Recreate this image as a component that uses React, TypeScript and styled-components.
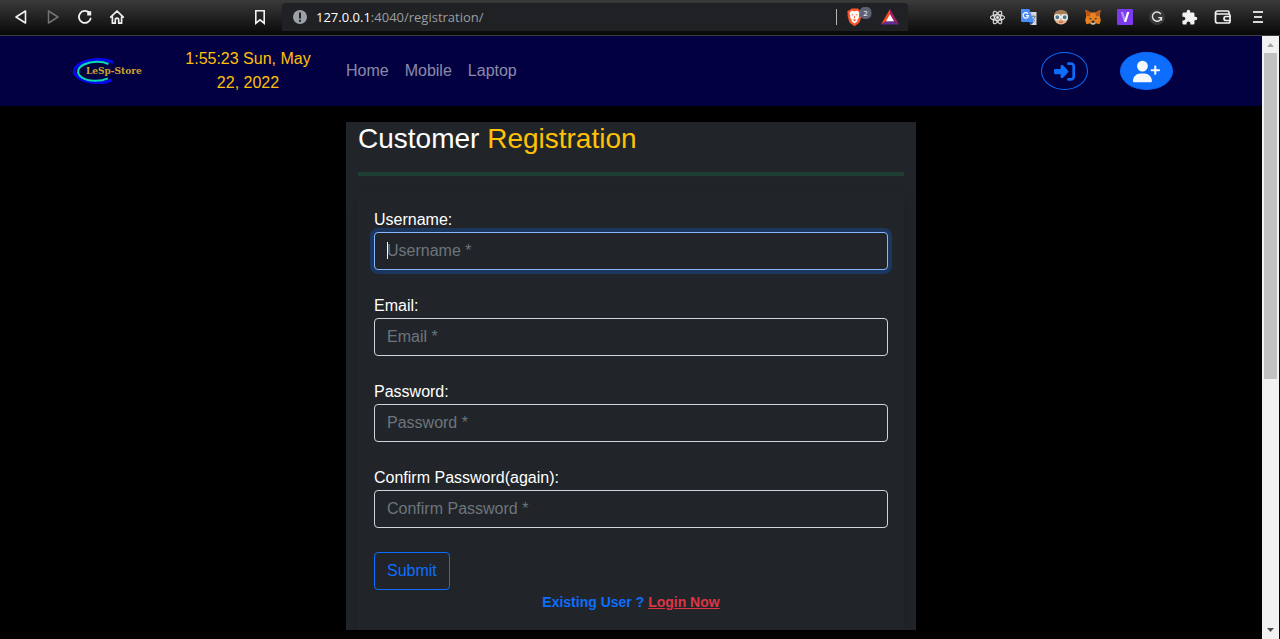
import React from "react";
import styled, { createGlobalStyle, css } from "styled-components";
import { FaReact } from "react-icons/fa";
import { FaRightToBracket, FaUserPlus } from "react-icons/fa6";
import { MdExtension } from "react-icons/md";

const GlobalStyle = createGlobalStyle`
  *, *::before, *::after { box-sizing: border-box; }
  body {
    margin: 0;
    background: #000;
    color: #fff;
    font-family: "Liberation Sans", Arial, sans-serif;
    font-size: 16px;
    line-height: 24px;
  }
`;

/* ---------- browser chrome ---------- */

const Window = styled.div`
  display: flex;
  flex-direction: column;
  height: 100vh;
  overflow: hidden;
`;

const Chrome = styled.header`
  flex: none;
  background: #0b0b0b;
  border-bottom: 1px solid #3c3c3c;
  padding-bottom: 4px;
`;

const Toolbar = styled.div`
  display: flex;
  align-items: stretch;
  height: 31px;
  padding: 0 5px;
  background: linear-gradient(#3a3a3a, #0e0e0e);
`;

const Tools = styled.div`
  display: flex;
  padding-top: 3px;
`;

const ToolButton = styled.button<{ $wide?: boolean }>`
  display: flex;
  align-items: center;
  justify-content: center;
  width: ${(p) => (p.$wide ? 35 : 32)}px;
  padding: 0;
  border: 0;
  background: none;
  color: #f1f1f1;
`;

const BookmarkSlot = styled(Tools)`
  margin-left: 111px;
`;

const AddressBar = styled.div`
  display: flex;
  flex: 1;
  align-items: center;
  gap: 8px;
  min-width: 0;
  margin: 3px 73px 0 6px;
  padding: 0 9px 0 10px;
  border-radius: 4px 4px 0 0;
  background: #202124;
`;

const Url = styled.div`
  flex: 1;
  color: #9a9da1;
  font: 13px/20px "Open Sans", "Noto Sans", sans-serif;

  b {
    color: #fff;
    font-weight: 400;
  }
`;

const Shields = styled.div`
  display: flex;
  align-items: center;
  gap: 8px;
  padding-left: 10px;
  border-left: 1px solid #b5b5b5;
  height: 16px;
`;

const Page = styled.div`
  display: flex;
  flex: 1;
  min-height: 0;
  border-right: 1px solid #000;
`;

const Content = styled.div`
  flex: 1;
  min-width: 0;
  overflow: hidden;
`;

const ScrollTrack = styled.div`
  display: flex;
  flex-direction: column;
  align-items: center;
  width: 17px;
  background: #f1f1f1;
`;

const ScrollArrow = styled.svg`
  flex: none;
  width: 17px;
  height: 17px;
`;

const ScrollThumb = styled.div`
  flex: 0 0 54%;
  width: 13px;
  background: #c1c1c1;
`;

const ScrollGap = styled.div`
  flex: 1;
`;

/* ---------- site ---------- */

const container = css`
  width: 100%;
  max-width: 1140px;
  margin: 0 auto;
  padding: 0 12px;
`;

const Navbar = styled.nav`
  padding: 11px 0;
  background: #030042;
`;

const NavInner = styled.div`
  ${container}
  display: flex;
  align-items: center;
`;

const Brand = styled.a`
  display: flex;
  margin-right: 35px;
`;

const Clock = styled.time`
  width: 140px;
  color: #ffc107;
  text-align: center;
`;

const NavLinks = styled.div`
  display: flex;
  gap: 16px;
  flex: 1;
  margin-left: 28px;
`;

const NavLink = styled.a`
  color: rgba(255, 255, 255, 0.55);
  text-decoration: none;
`;

const Account = styled.div`
  display: flex;
  gap: 32px;
  margin-right: 16px;
`;

const RoundButton = styled.button<{ $filled?: boolean }>`
  display: flex;
  align-items: center;
  justify-content: center;
  height: 38px;
  padding: 0 12px;
  border: 1px solid #0d6efd;
  border-radius: 50%;
  background: ${(p) => (p.$filled ? "#0d6efd" : "transparent")};
  color: ${(p) => (p.$filled ? "#f8f9fa" : "#0d6efd")};
`;

const Main = styled.main`
  ${container}
  display: flex;
  justify-content: center;
`;

const Card = styled.section`
  width: 570px;
  max-width: 100%;
  margin-top: 16px;
  padding: 0 12px;
  background: #212529;
`;

const Title = styled.h1`
  margin: 0 0 16px;
  font-size: 28px;
  font-weight: 400;
  line-height: 34px;

  span {
    color: #ffc107;
  }
`;

const Rule = styled.hr`
  height: 4px;
  margin: 0 0 16px;
  border: 0;
  background: #198754;
  opacity: 0.25;
`;

const Form = styled.form`
  padding: 16px;
  box-shadow: 0 8px 16px rgba(0, 0, 0, 0.15);
`;

const Field = styled.div`
  position: relative;
  margin-bottom: 24px;

  label {
    display: block;
  }
`;

const Input = styled.input<{ $focused?: boolean }>`
  display: block;
  width: 100%;
  height: 38px;
  padding: 6px 12px;
  border: 1px solid #ced4da;
  border-radius: 4px;
  outline: 0;
  background: #212529;
  color: #fff;
  font: inherit;

  &::placeholder {
    color: #6c757d;
    opacity: 1;
  }

  ${(p) =>
    p.$focused &&
    css`
      border-color: #86b7fe;
      box-shadow: 0 0 0 4px rgba(13, 110, 253, 0.25);
    `}
`;

const Caret = styled.i`
  position: absolute;
  left: 13px;
  bottom: 11px;
  width: 1px;
  height: 17px;
  background: #fff;
`;

const Submit = styled.button`
  display: block;
  height: 38px;
  padding: 0 12px;
  border: 1px solid #0d6efd;
  border-radius: 4px;
  background: none;
  color: #0d6efd;
  font: inherit;
`;

const Existing = styled.div`
  color: #0d6efd;
  font-size: 14px;
  font-weight: 700;
  text-align: center;

  a {
    color: #dc3545;
  }
`;

/* ---------- icons ---------- */

const stroke = {
  fill: "none",
  stroke: "currentColor",
  strokeWidth: 1.8,
  strokeLinejoin: "round" as const,
  strokeLinecap: "round" as const,
};

const BackIcon = () => (
  <svg width="16" height="16" viewBox="0 0 16 16" {...stroke} strokeWidth="1.6">
    <path d="M12.5 2v12L3 8z" />
  </svg>
);

const ForwardIcon = () => (
  <svg width="16" height="16" viewBox="0 0 16 16" {...stroke} stroke="#737373" strokeWidth="1.5">
    <path d="M3.5 2v12L13 8z" />
  </svg>
);

const ReloadIcon = () => (
  <svg width="16" height="16" viewBox="0 0 16 16" {...stroke}>
    <path d="M12.2 3.700A6 6 0 1 0 13.700 9.500" />
    <path d="M10.200 2.200h4v4.300h-4z" fill="currentColor" stroke="none" />
  </svg>
);

const HomeIcon = () => (
  <svg width="16" height="16" viewBox="0 0 16 16" {...stroke} strokeWidth="1.7">
    <path d="M1.700 8.200 8 2l6.300 6.200M3.400 7.500v6.700h2.900v-3.400a1.700 1.700 0 0 1 3.400 0v3.400h2.900V7.500" />
  </svg>
);

const BookmarkIcon = () => (
  <svg width="16" height="16" viewBox="0 0 16 16" {...stroke} strokeWidth="1.6">
    <path d="M3.800 1.800h8.400v12.400L8 10.800l-4.200 3.400z" strokeLinejoin="miter" />
  </svg>
);

const InfoIcon = () => (
  <svg width="16" height="16" viewBox="0 0 16 16">
    <circle cx="8" cy="8" r="7" fill="#9aa0a6" />
    <path d="M7 3.500h2v6H7zM7 10.800h2v2H7z" fill="#202124" />
  </svg>
);

const BraveIcon = () => (
  <svg width="26" height="22" viewBox="0 0 26 22">
    <path
      d="M4.500 2.500h6.500l1.500 1.800 1.600.2.600 2-.5 1.800.3 1.200-1.600 6-1.200 1.700-4.200 3.100-4.200-3.100-1.200-1.700-1.600-6 .3-1.200L.3 6.500l.6-2 1.600-.2z"
      fill="#fb542b"
    />
    <path
      d="M4.500 4.800 7.500 5.300l3-.5 2 2-.8 3.300.3 1.400-1.800 2.500.2 1.200-2.900 2.300-2.900-2.300.2-1.200L3 11.500l.3-1.400-.8-3.300z"
      fill="#fff"
    />
    <path d="m4.300 8 2.100.5-.6 1.200zm6.400 0-2.100.5.6 1.200zM7.100 10h.8l.2 2-.6.6-.6-.6zM5.500 13.800l2-.6 2 .6-2 1.500z" fill="#fb542b" />
    <rect x="12.500" y="1" width="12" height="12" rx="5" fill="#5e6175" />
    <text x="18.500" y="10" fill="#fff" fontSize="8" textAnchor="middle" fontFamily="Open Sans, sans-serif">
      2
    </text>
  </svg>
);

const RewardsIcon = () => (
  <svg width="18" height="16" viewBox="0 0 18 16">
    <path d="M9 0 0 15.500 9 10z" fill="#ff4724" />
    <path d="m9 0 9 15.500L9 10z" fill="#9e1f63" />
    <path d="M0 15.500h18L9 10z" fill="#662d91" />
    <path d="m9 5.200 4 7H5z" fill="#fff" />
  </svg>
);

const TranslateIcon = () => (
  <svg width="16" height="16" viewBox="0 0 16 16">
    <path d="M6 3h9.500v13H9.500z" fill="#d5d8dc" />
    <path d="M9.800 7.400h5M12.300 6.200v1.200M14 7.500c-.5 2-1.600 3.600-3.300 4.700M10.800 8.500c.7 1.500 1.900 2.900 3.400 3.900" stroke="#6b8495" strokeWidth="1" fill="none" />
    <path d="M0 0h8.300l4.400 13H1.200A1.200 1.200 0 0 1 0 11.800z" fill="#4b8df6" />
    <path d="M8 13h4.700L10 16z" fill="#2956b4" />
    <path d="M7 4.800A2.700 2.700 0 1 0 7.500 6.700H5" stroke="#fff" strokeWidth="1.200" fill="none" />
  </svg>
);

const FaceIcon = () => (
  <svg width="16" height="16" viewBox="0 0 16 16">
    <circle cx="8" cy="8.500" r="7" fill="#e9b08b" />
    <path d="M1 7C1 3 4 1 8 1s7 2 7 6C13 5.500 11 4.800 9 5 6 5.500 3 5.500 1 7z" fill="#a87d5c" />
    <path d="M7 8h2" stroke="#f4f7f8" strokeWidth="1.500" />
    <circle cx="4.300" cy="8.300" r="2.600" fill="#4d788c" stroke="#e8f0f2" strokeWidth="1.300" />
    <circle cx="11.700" cy="8.300" r="2.600" fill="#4d788c" stroke="#e8f0f2" strokeWidth="1.300" />
    <path d="M6 13h4" stroke="#a05a48" />
  </svg>
);

const FoxIcon = () => (
  <svg width="16" height="16" viewBox="0 0 16 16">
    <path d="m.5.800 5.300 2.700h4.400L15.500.800l-.7 6.500 1 4-1.300 4-3.800-1-1.300 1.200H6.600l-1.300-1.200-3.800 1-1.300-4 1-4z" fill="#e8821e" />
    <path d="m.5.800 5.300 2.700-1 4-3.300-.5zM15.500.800l-5.300 2.700 1 4 3.300-.5z" fill="#b8581c" />
    <path d="m3.600 9.500 2.300-.5.500 1.800zm8.800 0L10.100 9l-.5 1.800z" fill="#28323c" />
    <path d="m5.300 14.300 1.200-1.800h3l1.200 1.800-1.300 1.200H6.600z" fill="#cdbfb3" />
    <path d="m6.500 12.500.4-.7h2.200l.4.700v1.200h-3z" fill="#28272a" />
  </svg>
);

const VIcon = () => (
  <svg width="16" height="16" viewBox="0 0 16 16">
    <rect width="16" height="16" rx="1" fill="#7c3aed" />
    <path d="M3.600 3h2.600l2 6.500-.2 3.500h-.9z" fill="#b691f5" />
    <path d="M10 3h2.400L9.200 13H7.100z" fill="#fff" />
  </svg>
);

const GIcon = () => (
  <svg width="16" height="16" viewBox="0 0 16 16">
    <circle cx="8" cy="8" r="8" fill="#383838" />
    <path d="M11.800 5A4.600 4.600 0 1 0 12.500 8.600H9.300M12.500 8.600v3" stroke="#e4e4e4" strokeWidth="1.400" fill="none" />
  </svg>
);

const WalletIcon = () => (
  <svg width="18" height="16" viewBox="0 0 18 16" {...stroke} strokeWidth="1.700">
    <path d="M15 5V3.500A1.500 1.500 0 0 0 13.500 2h-10a2 2 0 0 0-2 2v8a2 2 0 0 0 2 2h11a1.500 1.500 0 0 0 1.500-1.500V6.500A1.500 1.500 0 0 0 14.500 5h-12" />
    <path d="M16 7.500h-4a2 2 0 0 0 0 4h4" />
  </svg>
);

const MenuIcon = () => (
  <svg width="16" height="16" viewBox="0 0 16 16" fill="#d8d8d8">
    <path d="M3 2h10v2H3zM4 7h8v2H4zM3 12h10v2H3z" />
  </svg>
);

const Logo = () => (
  <svg width="70" height="26" viewBox="0 0 70 26">
    <g fill="none">
      <path d="M40 4.800C34 1.200 23 .5 14.500 3S1 9.500 1.500 14 9 22.500 18 24s17 0 20.500-2.200" stroke="#0707ef" strokeWidth="3" />
      <path d="M35.500 6C29 2.600 18 3 11 6.500s-8 9-2 13 18 4.500 26 .8" stroke="#06d9b5" strokeWidth="2" />
    </g>
    <text x="13" y="16" fill="#caa52b" fontSize="9" fontWeight="700" fontFamily="DejaVu Serif, serif">
      LeSp-Store
    </text>
  </svg>
);

/* ---------- page ---------- */

const fields = [
  { id: "username", label: "Username:", hint: "Username *", type: "text", focused: true },
  { id: "email", label: "Email:", hint: "Email *", type: "email" },
  { id: "password1", label: "Password:", hint: "Password *", type: "password" },
  { id: "password2", label: "Confirm Password(again):", hint: "Confirm Password *", type: "password" },
];

const extensions = [
  { name: "React Developer Tools", icon: <FaReact size={15} stroke="currentColor" strokeWidth={16} /> },
  { name: "Translate", icon: <TranslateIcon /> },
  { name: "Avatar", icon: <FaceIcon /> },
  { name: "Wallet fox", icon: <FoxIcon /> },
  { name: "V", icon: <VIcon /> },
  { name: "G", icon: <GIcon /> },
  { name: "Extensions", icon: <MdExtension size={17} /> },
];

export default function App() {
  return (
    <Window>
      <GlobalStyle />
      <Chrome>
        <Toolbar>
          <Tools>
            <ToolButton aria-label="Back"><BackIcon /></ToolButton>
            <ToolButton aria-label="Forward"><ForwardIcon /></ToolButton>
            <ToolButton aria-label="Reload"><ReloadIcon /></ToolButton>
            <ToolButton aria-label="Home"><HomeIcon /></ToolButton>
          </Tools>
          <BookmarkSlot>
            <ToolButton aria-label="Bookmark"><BookmarkIcon /></ToolButton>
          </BookmarkSlot>
          <AddressBar>
            <InfoIcon />
            <Url><b>127.0.0.1</b>:4040/registration/</Url>
            <Shields>
              <BraveIcon />
              <RewardsIcon />
            </Shields>
          </AddressBar>
          <Tools>
            {extensions.map((e) => (
              <ToolButton key={e.name} aria-label={e.name}>{e.icon}</ToolButton>
            ))}
            <ToolButton $wide aria-label="Wallet"><WalletIcon /></ToolButton>
            <ToolButton $wide aria-label="Menu"><MenuIcon /></ToolButton>
          </Tools>
        </Toolbar>
      </Chrome>
      <Page>
        <Content>
          <Navbar>
            <NavInner>
              <Brand href="#" aria-label="LeSp-Store"><Logo /></Brand>
              <Clock>1:55:23 Sun, May 22, 2022</Clock>
              <NavLinks>
                <NavLink href="#">Home</NavLink>
                <NavLink href="#">Mobile</NavLink>
                <NavLink href="#">Laptop</NavLink>
              </NavLinks>
              <Account>
                <RoundButton aria-label="Log in"><FaRightToBracket size={21} /></RoundButton>
                <RoundButton $filled aria-label="Register"><FaUserPlus size={27} /></RoundButton>
              </Account>
            </NavInner>
          </Navbar>
          <Main>
            <Card>
              <Title>Customer <span>Registration</span></Title>
              <Rule />
              <Form>
                {fields.map((f) => (
                  <Field key={f.id}>
                    <label htmlFor={f.id}>{f.label}</label>
                    <Input id={f.id} type={f.type} placeholder={f.hint} $focused={f.focused} />
                    {f.focused && <Caret />}
                  </Field>
                ))}
                <Submit type="button">Submit</Submit>
                <Existing>
                  Existing User ? <a href="#">Login Now</a>
                </Existing>
              </Form>
            </Card>
          </Main>
        </Content>
        <ScrollTrack>
          <ScrollArrow viewBox="0 0 17 17"><path d="M5 11h7L8.500 7z" fill="#a3a3a3" /></ScrollArrow>
          <ScrollThumb />
          <ScrollGap />
          <ScrollArrow viewBox="0 0 17 17"><path d="M5 6h7l-3.500 4z" fill="#505050" /></ScrollArrow>
        </ScrollTrack>
      </Page>
    </Window>
  );
}
